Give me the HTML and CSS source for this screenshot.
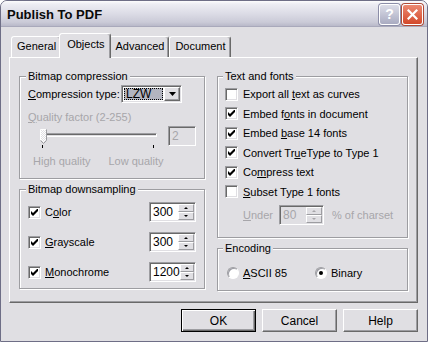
FILE: index.html
```html
<!DOCTYPE html>
<html>
<head>
<meta charset="utf-8">
<link rel="stylesheet" href="styles.css">
</head>
<body>
<div class="window">
  <div class="titlebar">
    <span class="title">Publish To PDF</span>
    <div class="caption-btns">
      <span class="cap-btn cap-help">?</span>
      <span class="cap-btn cap-close">
        <svg width="11" height="11" viewBox="0 0 11 11"><path d="M1.5 1.5 L9.5 9.5 M9.5 1.5 L1.5 9.5" stroke="#fff" stroke-width="2.2" stroke-linecap="square"/></svg>
      </span>
    </div>
  </div>
  <div class="client">
    <div class="tabs">
      <div class="tab">General</div>
      <div class="tab active">Objects</div>
      <div class="tab">Advanced</div>
      <div class="tab">Document</div>
    </div>
    <div class="panel">
      <div class="col">
        <div class="group g-compress">
          <div class="gtitle">Bitmap compression</div>
          <div class="row-combo">
            <span><u>C</u>ompression type:</span>
            <div class="combo">
              <span class="combo-sel"><span>LZW</span></span>
              <span class="combo-btn"><svg width="7" height="4" viewBox="0 0 7 4"><path d="M0 0 H7 L3.5 4 Z" fill="#000"/></svg></span>
            </div>
          </div>
          <div class="disabled qlabel"><u>Q</u>uality factor (2-255)</div>
          <div class="slider-row">
            <div class="slider">
              <div class="track"></div>
              <svg class="thumb" width="7" height="15" viewBox="0 0 7 15">
                <defs>
                  <pattern id="dots" width="2" height="2" patternUnits="userSpaceOnUse">
                    <rect width="2" height="2" fill="#fff"/>
                    <rect width="1" height="1" fill="#e0dfe3"/>
                    <rect x="1" y="1" width="1" height="1" fill="#e0dfe3"/>
                  </pattern>
                </defs>
                <path d="M0.5 0.5 H6.5 V11.5 L3.5 14.5 L0.5 11.5 Z" fill="url(#dots)"/>
                <path d="M0.5 11.5 V0.5 H6" stroke="#fff" fill="none"/>
                <path d="M6.5 0.5 V11.5 L3.5 14.5 L0.5 11.5" stroke="#9d9da1" fill="none"/>
              </svg>
              <div class="ticks"><span class="tick"></span><span class="tick"></span></div>
            </div>
            <div class="edit disabled-edit">2</div>
          </div>
          <div class="disabled qualities"><span>High quality</span><span class="lowq">Low quality</span></div>
        </div>
        <div class="group g-down">
          <div class="gtitle">Bitmap downsampling</div>
          <div class="down-row">
            <span class="check on"><svg width="7" height="7" viewBox="0 0 7 7"><path d="M0 2 L2 4 L7 -1 L7 2 L2 7 L0 5 Z" fill="#000"/></svg></span>
            <span class="lbl">C<u>o</u>lor</span>
            <div class="spin"><span class="spin-val">300</span><span class="spin-btns"><span class="sb"><i class="up"></i></span><span class="sb"><i class="dn"></i></span></span></div>
          </div>
          <div class="down-row">
            <span class="check on"><svg width="7" height="7" viewBox="0 0 7 7"><path d="M0 2 L2 4 L7 -1 L7 2 L2 7 L0 5 Z" fill="#000"/></svg></span>
            <span class="lbl"><u>G</u>rayscale</span>
            <div class="spin"><span class="spin-val">300</span><span class="spin-btns"><span class="sb"><i class="up"></i></span><span class="sb"><i class="dn"></i></span></span></div>
          </div>
          <div class="down-row">
            <span class="check on"><svg width="7" height="7" viewBox="0 0 7 7"><path d="M0 2 L2 4 L7 -1 L7 2 L2 7 L0 5 Z" fill="#000"/></svg></span>
            <span class="lbl"><u>M</u>onochrome</span>
            <div class="spin"><span class="spin-val">1200</span><span class="spin-btns"><span class="sb"><i class="up"></i></span><span class="sb"><i class="dn"></i></span></span></div>
          </div>
        </div>
      </div>
      <div class="col">
        <div class="group g-text">
          <div class="gtitle">Text and fonts</div>
          <div class="checklist">
            <div class="crow"><span class="check"></span><span class="lbl">Export all <u>t</u>ext as curves</span></div>
            <div class="crow"><span class="check on"><svg width="7" height="7" viewBox="0 0 7 7"><path d="M0 2 L2 4 L7 -1 L7 2 L2 7 L0 5 Z" fill="#000"/></svg></span><span class="lbl">Embed f<u>o</u>nts in document</span></div>
            <div class="crow"><span class="check on"><svg width="7" height="7" viewBox="0 0 7 7"><path d="M0 2 L2 4 L7 -1 L7 2 L2 7 L0 5 Z" fill="#000"/></svg></span><span class="lbl">Embed <u>b</u>ase 14 fonts</span></div>
            <div class="crow"><span class="check on"><svg width="7" height="7" viewBox="0 0 7 7"><path d="M0 2 L2 4 L7 -1 L7 2 L2 7 L0 5 Z" fill="#000"/></svg></span><span class="lbl">Convert Tr<u>u</u>eType to Type 1</span></div>
            <div class="crow"><span class="check on"><svg width="7" height="7" viewBox="0 0 7 7"><path d="M0 2 L2 4 L7 -1 L7 2 L2 7 L0 5 Z" fill="#000"/></svg></span><span class="lbl">Co<u>m</u>press text</span></div>
            <div class="crow"><span class="check"></span><span class="lbl"><u>S</u>ubset Type 1 fonts</span></div>
          </div>
          <div class="under-row disabled">
            <span><u>U</u>nder</span>
            <div class="spin spin-dis"><span class="spin-val">80</span><span class="spin-btns"><span class="sb"><i class="up"></i></span><span class="sb"><i class="dn"></i></span></span></div>
            <span>% of charset</span>
          </div>
        </div>
        <div class="group g-enc">
          <div class="gtitle">Encoding</div>
          <div class="radio-row">
            <span class="radio"></span><span class="lbl"><u>A</u>SCII 85</span>
            <span class="radio on r2"><i></i></span><span class="lbl">Binary</span>
          </div>
        </div>
      </div>
    </div>
    <div class="buttons">
      <div class="btn default">OK</div>
      <div class="btn">Cancel</div>
      <div class="btn">Help</div>
    </div>
  </div>
</div>
</body>
</html>
```

FILE: styles.css
```css
* { box-sizing: border-box; }
html, body { margin: 0; padding: 0; }
body {
  width: 428px; height: 342px; overflow: hidden; background: #fff;
  font: 11px "Liberation Sans", Arial, sans-serif; color: #000;
}
u { text-decoration: underline; text-underline-offset: 1px; }

.window {
  width: 428px; height: 342px;
  border: 1px solid #6e6e86;
  border-radius: 7px 7px 0 0;
  background: #e0dfe3;
  display: flex; flex-direction: column;
  overflow: hidden;
}

.titlebar {
  height: 26px; flex: none;
  display: flex; align-items: center;
  padding: 0 4px 0 6px;
  background: linear-gradient(#fdfdfd 0%, #ededf3 12%, #dcdce6 50%, #cacad7 85%, #b9b9c9 100%);
  border-bottom: 1px solid #a9a9bb;
}
.title { flex: 1; font-weight: bold; font-size: 13px; color: #0a0a0a; padding-top: 1px; }
.caption-btns { display: flex; gap: 2px; margin-top: 1px; }
.cap-btn {
  width: 21px; height: 21px; border-radius: 3px;
  border: 1px solid #fff;
  display: flex; align-items: center; justify-content: center;
}
.cap-help {
  background: linear-gradient(#dcdde8, #a9abc1);
  color: #fff; font: bold 14px "Liberation Sans", Arial, sans-serif;
  box-shadow: 0 0 0 1px #8c8ea8;
}
.cap-close {
  background: linear-gradient(#ec8a72, #d3482a);
  box-shadow: 0 0 0 1px #b04a35;
}

.client { flex: 1; padding: 6px 9px 0 8px; display: flex; flex-direction: column; }

.tabs { display: flex; align-items: flex-end; height: 24px; padding-left: 2px; }
.tab {
  height: 21px; padding: 0 4px 0 5px; line-height: 19px;
  border: 1px solid; border-bottom: none;
  border-color: #fff #696969 transparent #fff;
  border-radius: 3px 3px 0 0;
  box-shadow: inset -1px 0 0 #9d9da1;
  background: #e0dfe3;
}
.tab.active {
  height: 25px; margin: 0 -2px -1px; padding: 0 6px 0 7px; line-height: 21px;
  position: relative; z-index: 1;
}

.panel {
  height: 246px;
  border: 1px solid; border-color: #fff #696969 #696969 #fff;
  box-shadow: inset -1px -1px 0 #9d9da1;
  display: grid; grid-template-columns: 186px 191px; column-gap: 12px;
  align-content: start;
  padding: 18px 0 0 9px;
}
.col { display: flex; flex-direction: column; gap: 10px; }

.group {
  border: 1px solid #9d9da1;
  box-shadow: inset 1px 1px 0 #fff, 1px 1px 0 #fff;
  padding: 0 8px;
}
.gtitle {
  display: table; margin: -7px 0 0 -2px; padding: 0 2px;
  line-height: 13px; background: #e0dfe3;
}
.g-compress { height: 103px; }
.g-down { height: 100px; }
.g-text { height: 162px; padding-left: 7px; }
.g-enc { height: 43px; padding-left: 7px; }

.disabled { color: #a7a6aa; }

.row-combo { display: flex; align-items: center; height: 18px; margin-top: 2px; gap: 1px; }
.combo {
  width: 61px; height: 18px; display: flex; padding: 1px;
  border: 1px solid; border-color: #9d9da1 #fff #fff #9d9da1;
  box-shadow: inset 1px 1px 0 #696969, inset -1px -1px 0 #e0dfe3;
  background: #fff; margin-left: auto; margin-right: 14px;
}
.combo-sel { flex: 1; padding: 1px; }
.combo-sel span {
  display: block; height: 100%; background: #b2b4bf; outline: 1px dotted #000;
  outline-offset: -1px; line-height: 12px; padding-left: 2px; font-size: 12px;
}
.combo-btn {
  width: 16px; display: flex; align-items: center; justify-content: center;
  background: #e0dfe3;
  border: 1px solid; border-color: #fff #696969 #696969 #fff;
  box-shadow: inset -1px -1px 0 #9d9da1;
}

.qlabel { line-height: 13px; margin-top: 8px; }
.slider-row { display: flex; height: 22px; margin-top: 2px; }
.slider { position: relative; width: 117px; margin-left: 12px; }
.track {
  margin-top: 7px; height: 4px;
  border: 1px solid; border-color: #9d9da1 #fff #fff #9d9da1;
  box-shadow: inset 1px 1px 0 #696969;
}
.thumb { position: absolute; left: 0; top: 3px; }
.ticks { display: flex; justify-content: space-between; padding: 0 3px 0 2px; margin-top: 8px; }
.tick { width: 1px; height: 3px; background: #000; }
.edit {
  width: 28px; height: 20px; margin-left: auto;
  border: 1px solid; border-color: #9d9da1 #fff #fff #9d9da1;
  box-shadow: inset 1px 1px 0 #696969, inset -1px -1px 0 #e0dfe3;
  padding: 0 3px; line-height: 18px; font-size: 12px;
}
.disabled-edit { color: #a7a6aa; background: #e0dfe3; }
.qualities { display: flex; line-height: 13px; margin-top: 7px; padding-left: 5px; }
.lowq { margin-left: 18px; }

.down-row { display: flex; align-items: center; height: 20px; margin-top: 10px; }
.g-down .gtitle + .down-row { margin-top: 6px; }

.check {
  width: 13px; height: 13px; flex: none; background: #fff;
  border: 1px solid; border-color: #9d9da1 #fff #fff #9d9da1;
  box-shadow: inset 1px 1px 0 #696969, inset -1px -1px 0 #e0dfe3;
  display: flex; align-items: center; justify-content: center;
}
.lbl { margin-left: 5px; }
.down-row .lbl { margin-left: 4px; }

.spin {
  width: 47px; height: 20px; display: flex; padding: 1px;
  border: 1px solid; border-color: #9d9da1 #fff #fff #9d9da1;
  box-shadow: inset 1px 1px 0 #696969, inset -1px -1px 0 #e0dfe3;
  background: #fff; margin-left: auto;
}
.spin-val { flex: 1; line-height: 16px; padding-left: 2px; font-size: 12px; }
.spin-btns { width: 16px; display: flex; flex-direction: column; }
.sb {
  flex: 1; background: #e0dfe3;
  border: 1px solid; border-color: #fff #9d9da1 #9d9da1 #fff;
  display: flex; align-items: center; justify-content: center;
}
.sb i { width: 0; height: 0; border-left: 2px solid transparent; border-right: 2px solid transparent; }
.sb i.up { border-bottom: 2px solid #000; }
.sb i.dn { border-top: 2px solid #000; }
.spin-dis { background: #e0dfe3; color: #a7a6aa; }
.spin-dis .sb i.up { border-bottom-color: #a7a6aa; }
.spin-dis .sb i.dn { border-top-color: #a7a6aa; }

.checklist { margin-top: 1.5px; }
.crow { display: flex; align-items: center; height: 19.5px; }
.under-row { display: flex; align-items: center; height: 20px; margin-top: 3.5px; padding-left: 18px; }
.under-row .spin { width: 45px; margin: 0 8px 0 6px; }

.radio-row { display: flex; align-items: center; height: 20px; margin-top: 8px; padding-left: 2px; }
.radio {
  width: 12px; height: 12px; flex: none; border-radius: 50%; background: #fff;
  border: 1px solid; border-color: #9d9da1 #fff #fff #9d9da1;
  box-shadow: inset 1px 1px 0 #9c9ca4;
  display: flex; align-items: center; justify-content: center;
}
.radio.r2 { margin-left: 28px; }
.radio i { width: 4px; height: 4px; border-radius: 50%; background: #000; }
.radio-row .lbl { margin-left: 4px; }

.buttons { display: flex; justify-content: flex-end; gap: 6px; margin-top: 6px; }
.btn {
  width: 75px; height: 23px; display: flex; align-items: center; justify-content: center;
  border: 1px solid; border-color: #fff #696969 #696969 #fff;
  box-shadow: inset -1px -1px 0 #9d9da1;
  background: #e0dfe3; font-size: 12px;
}
.btn.default {
  border-color: #000;
  box-shadow: inset 1px 1px 0 #fff, inset -1px -1px 0 #696969, inset -2px -2px 0 #9d9da1;
}
```
